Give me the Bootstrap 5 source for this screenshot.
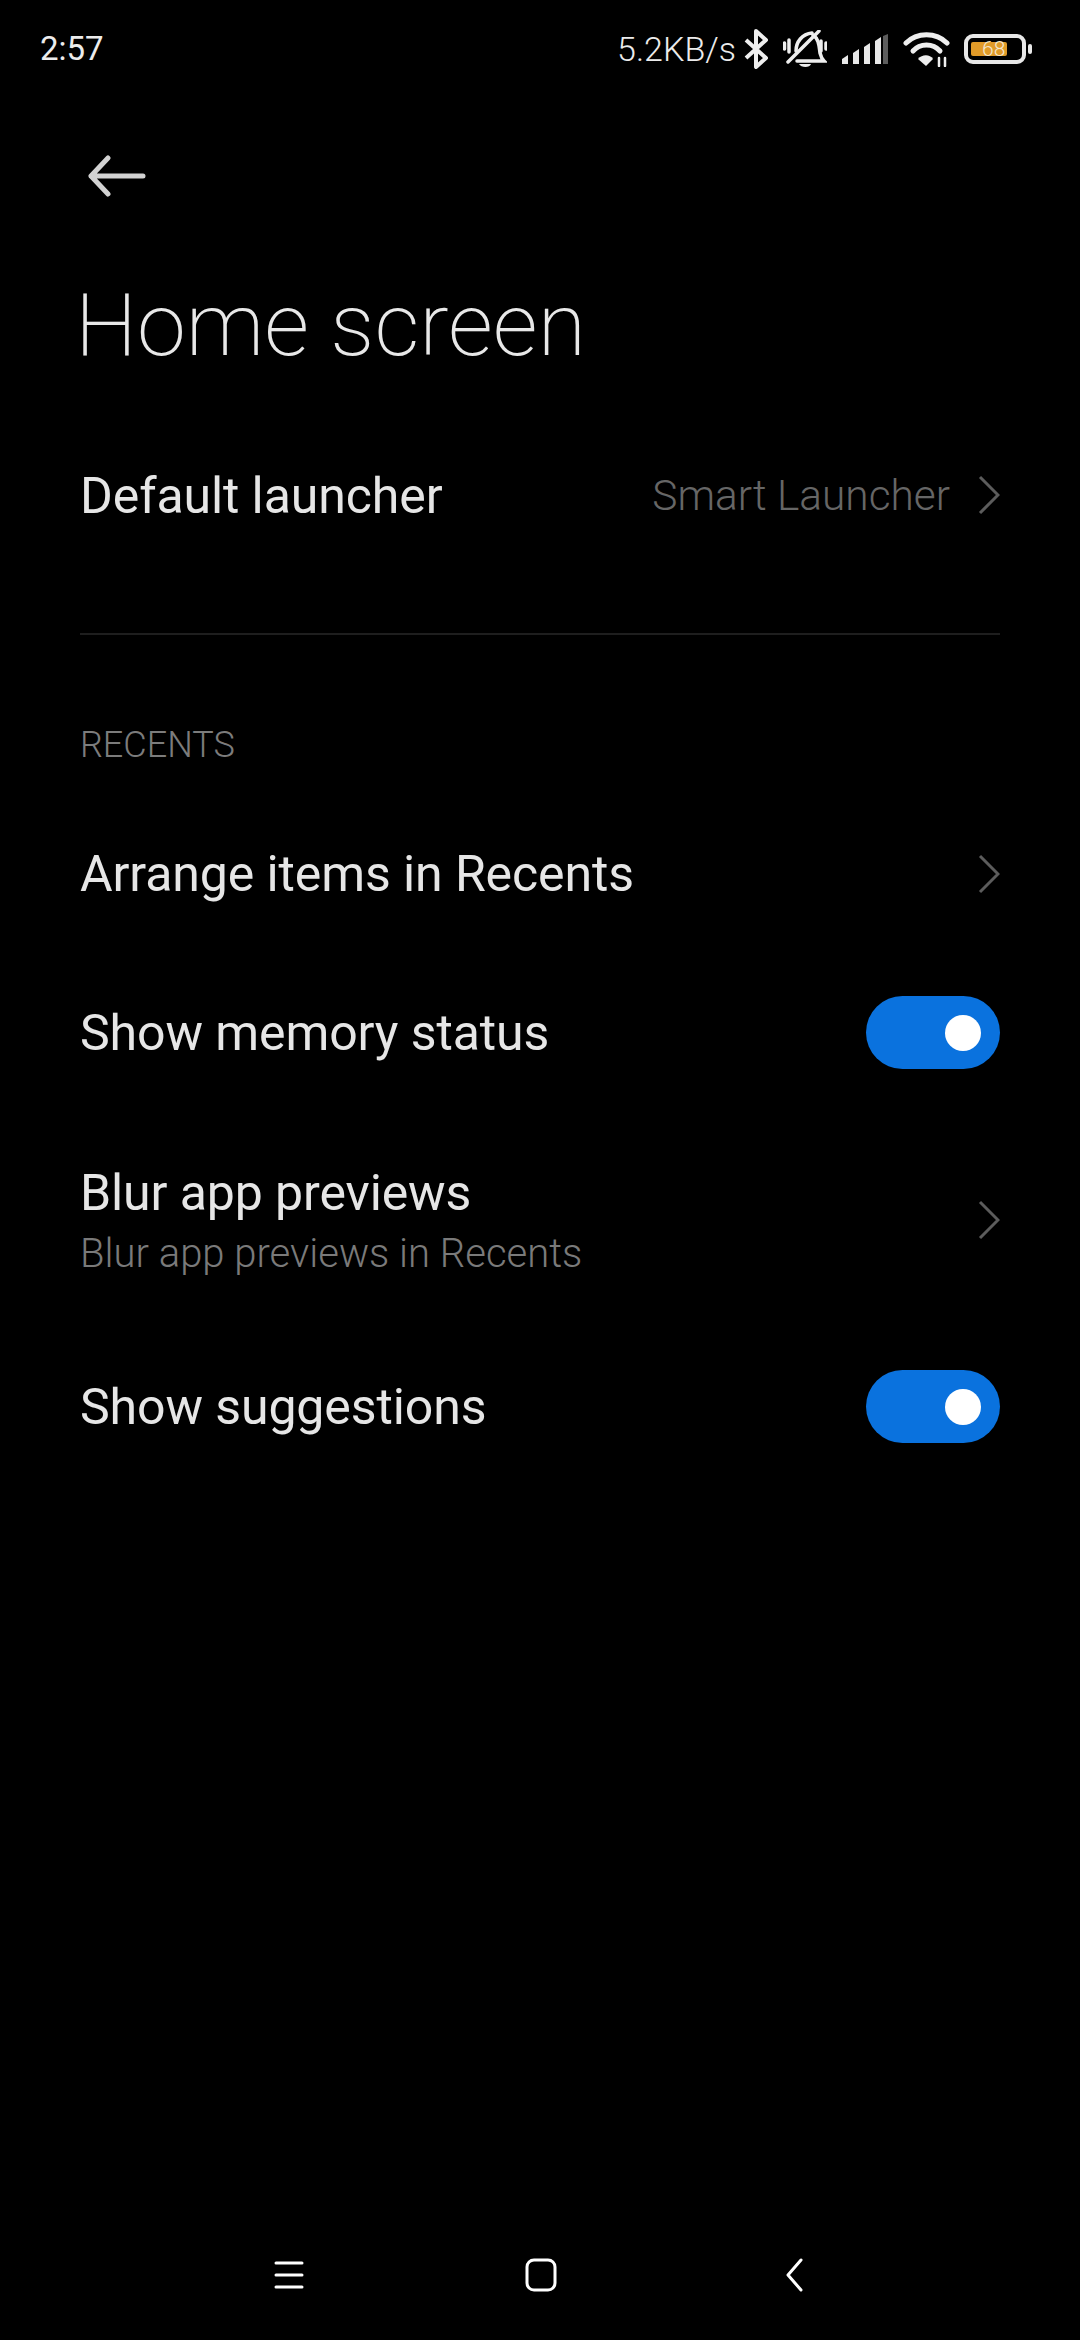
<!DOCTYPE html>
<html lang="en">

<head>
  <meta charset="UTF-8">
  <meta name="viewport" content="width=device-width, initial-scale=1">
  <title>Home screen</title>

  <link href="https://cdn.jsdelivr.net/npm/bootstrap@5.3.0/dist/css/bootstrap.min.css" rel="stylesheet">

  <style>
    body {
      background-color: #000;
      font-family: Roboto, "Liberation Sans", sans-serif;
      color: #eee;
      width: 1080px;
      height: 2340px;
      overflow: hidden;
    }

    .status-bar {
      height: 98px;
      padding: 0 48px 0 40px;
      color: #ececec;
      font-size: 33px;
    }

    .status-speed {
      font-size: 34px;
      font-weight: 300;
      margin-right: -6px;
    }

    .status-icons {
      gap: 14px;
    }

    .batt-shell {
      width: 62px;
      height: 30px;
      border: 4px solid #e8e8e8;
      border-radius: 9px;
      padding: 4px 3px;
      position: relative;
    }

    .batt-fill {
      width: 36px;
      height: 100%;
      background-color: #e09a28;
      border-radius: 2px;
    }

    .batt-num {
      position: absolute;
      left: 14px;
      top: -3px;
      font-size: 21px;
      line-height: 28px;
      font-weight: 300;
      color: #f3e7cf;
    }

    .batt-nub {
      width: 4px;
      height: 10px;
      margin-left: 2px;
      background-color: #e8e8e8;
      border-radius: 2px;
    }

    .back-row {
      height: 156px;
      padding-left: 88px;
    }

    .page-title {
      margin: 19px 0 0 75px;
      font-size: 88px;
      line-height: 104px;
      font-weight: 200;
      color: #e8e8e8;
    }

    .settings-list {
      --bs-list-group-bg: transparent;
      --bs-list-group-border-width: 0;
      --bs-list-group-color: #eee;
      --bs-list-group-item-padding-x: 0;
      --bs-list-group-item-padding-y: 0;
      margin: 0 80px;
    }

    .setting-row {
      height: 159px;
    }

    .setting-row.two-line {
      height: 215px;
    }

    .setting-name {
      font-size: 50px;
      line-height: 60px;
      letter-spacing: -0.1px;
      color: #e6e6e6;
    }

    .setting-sub {
      font-size: 40px;
      line-height: 62px;
      color: #7a7a7a;
      font-weight: 300;
    }

    .setting-text {
      padding-top: 9px;
    }

    .setting-value {
      font-size: 42.4px;
      font-weight: 300;
      color: #666;
      margin-right: 28px;
    }

    .top-group {
      margin-top: 39px;
      margin-bottom: 58px;
    }

    .list-rule {
      height: 2px;
      margin: 0 80px;
      background-color: #1e1e1e;
    }

    .section-label {
      margin: 90px 80px 29px;
      font-size: 36px;
      line-height: 40px;
      font-weight: 300;
      color: #7c7c7c;
    }

    .toggle-pill {
      width: 134px;
      height: 73px;
      border-radius: 37px;
      background-color: #0a72de;
      padding-right: 19px;
    }

    .toggle-knob {
      width: 36px;
      height: 36px;
      border-radius: 50%;
      background-color: #fff;
    }

    .nav-bar {
      position: absolute;
      left: 274px;
      top: 2254px;
      height: 42px;
    }

    .nav-square {
      margin-left: 221px;
    }

    .nav-back {
      margin-left: 228px;
    }
  </style>
</head>

<body>

  <!-- Status bar -->
  <div class="status-bar d-flex align-items-center justify-content-between">
    <span>2:57</span>
    <div class="status-icons d-flex align-items-center">
      <span class="status-speed">5.2KB/s</span>
      <svg width="25" height="40" viewBox="0 0 25 40" fill="none" stroke="#eee" stroke-width="4" stroke-linejoin="round"><path d="M2 11 L22 29 L12 38 V2 L22 11 L2 29"/></svg>
      <svg width="44" height="38" viewBox="0 0 44 38" fill="none" stroke="#eee" stroke-linecap="round"><path stroke-width="3.5" d="M13 21 C13 12 19 4 29 3 M30 5 C36 9 36 16 37 23 C38 27 39 29 41 31 H14"/><path stroke-width="3.5" d="M5 32 L36 1 M1.5 13 V19 M6 10 V22 M38 11 V21 M43 13 V19"/><path fill="#eee" stroke="none" d="M16 34 H28 C27 38 18 38 16 34Z"/></svg>
      <svg width="48" height="31" viewBox="0 0 48 31"><path fill="#e8e8e8" d="M1 25 L7 21 V30 H1Z M12 19 L18 15 V30 H12Z M23 13 L29 9 V30 H23Z M34 7 L40 3 V30 H34Z"/><path fill="#5c5c5c" d="M42 2 L47 0 V30 H42Z"/></svg>
      <svg width="47" height="36" viewBox="0 0 47 36" fill="none" stroke="#eee" stroke-width="5" stroke-linecap="round"><path d="M3 12 C14 1 33 1 44 12"/><path d="M10 20 C17 12 30 12 37 20"/><path fill="#eee" stroke="none" d="M15 28 C19 23 27 23 30 28 L23 35Z"/><path stroke-width="2.5" d="M36 27 V35 M42 27 V35"/></svg>
      <div class="d-flex align-items-center">
        <div class="batt-shell">
          <div class="batt-fill"></div>
          <span class="batt-num">68</span>
        </div>
        <div class="batt-nub"></div>
      </div>
    </div>
  </div>

  <!-- Back arrow -->
  <div class="back-row d-flex align-items-center">
    <svg width="58" height="42" viewBox="0 0 58 42" fill="none" stroke="#d2d2d2" stroke-width="5" stroke-linecap="round" stroke-linejoin="round"><path d="M55 21 H3 M20 3 L3 21 L20 39"/></svg>
  </div>

  <h1 class="page-title">Home screen</h1>

  <ul class="list-group settings-list top-group">
    <li class="list-group-item setting-row d-flex align-items-center justify-content-between">
      <span class="setting-name">Default launcher</span>
      <span class="d-flex align-items-center">
        <span class="setting-value">Smart Launcher</span>
        <svg width="22" height="40" viewBox="0 0 22 40" fill="none" stroke="#5c5c5c" stroke-width="3"><path d="M2 2 L20 20 L2 38"/></svg>
      </span>
    </li>
  </ul>

  <div class="list-rule"></div>

  <div class="section-label">RECENTS</div>

  <ul class="list-group settings-list">
    <li class="list-group-item setting-row d-flex align-items-center justify-content-between">
      <span class="setting-name">Arrange items in Recents</span>
      <svg width="22" height="40" viewBox="0 0 22 40" fill="none" stroke="#5c5c5c" stroke-width="3"><path d="M2 2 L20 20 L2 38"/></svg>
    </li>
    <li class="list-group-item setting-row d-flex align-items-center justify-content-between">
      <span class="setting-name">Show memory status</span>
      <div class="toggle-pill d-flex align-items-center justify-content-end"><div class="toggle-knob"></div></div>
    </li>
    <li class="list-group-item setting-row two-line d-flex align-items-center justify-content-between">
      <div class="setting-text d-flex flex-column">
        <span class="setting-name">Blur app previews</span>
        <span class="setting-sub">Blur app previews in Recents</span>
      </div>
      <svg width="22" height="40" viewBox="0 0 22 40" fill="none" stroke="#5c5c5c" stroke-width="3"><path d="M2 2 L20 20 L2 38"/></svg>
    </li>
    <li class="list-group-item setting-row d-flex align-items-center justify-content-between">
      <span class="setting-name">Show suggestions</span>
      <div class="toggle-pill d-flex align-items-center justify-content-end"><div class="toggle-knob"></div></div>
    </li>
  </ul>

  <!-- Navigation bar -->
  <div class="nav-bar d-flex align-items-center">
    <svg width="30" height="30" viewBox="0 0 30 30" fill="none" stroke="#fff" stroke-width="3" stroke-linecap="round"><path d="M2 3 H28 M2 15 H28 M2 27 H28"/></svg>
    <svg class="nav-square" width="32" height="34" viewBox="0 0 32 34" fill="none" stroke="#fff" stroke-width="3"><rect x="2" y="2" width="28" height="30" rx="7"/></svg>
    <svg class="nav-back" width="18" height="36" viewBox="0 0 18 36" fill="none" stroke="#fff" stroke-width="3" stroke-linecap="round" stroke-linejoin="round"><path d="M16 3 L3 18 L16 33"/></svg>
  </div>

  <script src="https://cdn.jsdelivr.net/npm/bootstrap@5.3.0/dist/js/bootstrap.bundle.min.js"></script>
</body>

</html>
